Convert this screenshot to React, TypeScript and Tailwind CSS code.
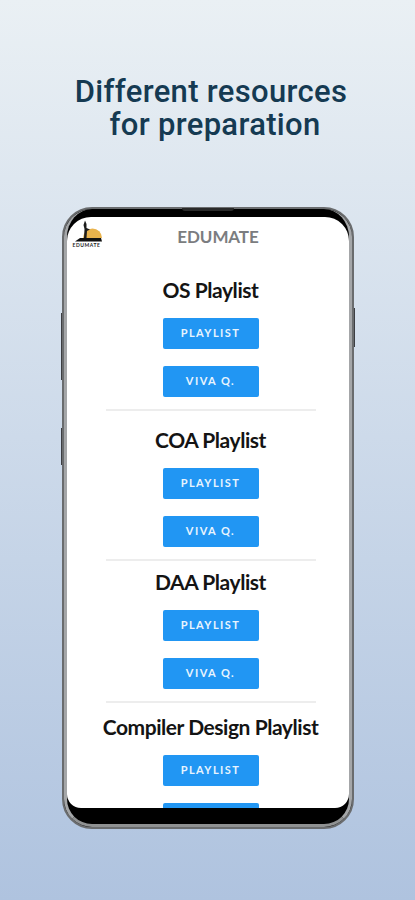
import React from 'react'

function BlueButton({ label }: { label: string }) {
    return (
        <div className="flex h-[31px] w-[96px] shrink-0 items-center justify-center rounded-[2px] bg-[#2196f3] text-[11px] font-bold tracking-[1.45px] text-[#e8f4fe]">
            {label}
        </div>
    )
}

function Section({ title, gap, divider = true }: { title: string; gap: string; divider?: boolean }) {
    return (
        <section className={`flex flex-col items-center ${gap}`}>
            <h2 className="mb-[-3px] h-[28px] text-center text-[21px] leading-[28px] font-bold tracking-[-0.45px] text-[#141414]">{title}</h2>
            <BlueButton label="PLAYLIST" />
            <BlueButton label="VIVA Q." />
            {divider && <div className="mt-[-5px] h-[2px] w-[210px] bg-[#ededed]"></div>}
        </section>
    )
}

function Logo() {
    return (
        <div className="absolute top-[3px] left-[4px] w-[32px]">
            <svg width="32" height="23" viewBox="0 0 32 23" className="block">
                <path d="M12 18 A9.5 9.5 0 1 1 31 18 Z" fill="#e9b34c" />
                <path d="M4 21.5 L9 18 L30 18 L31 21.5 Z" fill="#111" />
                <path d="M13 18 L13.5 9 L12.5 5 L14 0.5 L15.5 4 L15.5 8 L19 9.5 L16 11 L15.5 18 Z" fill="#1c1c1c" />
            </svg>
            <div className="text-center text-[5px] leading-[4px] font-bold tracking-[0.55px] text-[#222]">EDUMATE</div>
        </div>
    )
}

export default function App() {
    return (
        <div className="flex h-[900px] w-[415px] flex-col items-center overflow-hidden bg-gradient-to-b from-[#eaf0f4] to-[#afc3df]">
            <h1 className="mt-[75px] w-full pl-[7px] text-center font-['Roboto',sans-serif] text-[31px] leading-[33px] font-medium tracking-[0.32px] whitespace-pre text-[#153a52]">
                Different resources
                <br />
                {'\u00a0for preparation'}
            </h1>

            <div className="relative mt-[66px] flex h-[622px] w-[292px] flex-col rounded-[30px] border-[2px] border-[#6a6c6e] bg-black">
                {/* side buttons and notch */}
                <div className="absolute top-[104px] -left-[3px] h-[67px] w-[1px] bg-[#3c3e42]"></div>
                <div className="absolute top-[219px] -left-[3px] h-[37px] w-[1px] bg-[#3c3e42]"></div>
                <div className="absolute top-[99px] -right-[3px] h-[39px] w-[1px] bg-[#3c3e42]"></div>
                <div className="absolute -top-[1px] left-1/2 h-[3px] w-[52px] -translate-x-1/2 rounded-b-[3px] bg-[#2a2a2a]"></div>

                <div className="flex min-h-0 flex-1 flex-col rounded-[28px] border-x-[3px] border-b-[3px] border-x-[#a4a6a8] border-b-[#8f9192] bg-black pt-[8px] pb-[16px]">
                    <div className="relative flex min-h-0 flex-1 flex-col overflow-hidden rounded-t-[24px] rounded-b-[14px] bg-white pl-[6px] font-['Lato','Noto_Sans',sans-serif]">
                        <Logo />
                        <div className="pt-[9px] pl-[15px] text-center text-[17px] leading-[21px] font-bold tracking-[-0.1px] text-[#7b7d80]">EDUMATE</div>
                        <Section title="OS Playlist" gap="mt-[29px] gap-[17px]" />
                        <Section title="COA Playlist" gap="mt-[15px] gap-[17px]" />
                        <Section title="DAA Playlist" gap="mt-[7px] gap-[17px]" />
                        <Section title="Compiler Design Playlist" gap="mt-[10px] gap-[17px]" divider={false} />
                    </div>
                </div>
            </div>
        </div>
    )
}
